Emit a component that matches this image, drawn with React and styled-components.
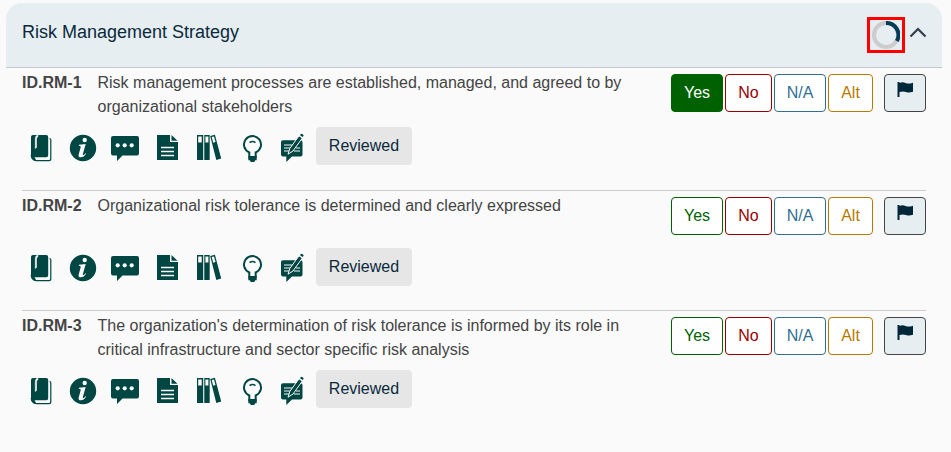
import React from "react";
import styled, { createGlobalStyle } from "styled-components";

const Global = createGlobalStyle`
  * { box-sizing: border-box; }
  body { margin: 0; background: #fafafa; font-family: "Liberation Sans", Arial, sans-serif; font-size: 16px; line-height: 24px; color: #444; }
`;
const Card = styled.section`
  width: 936px; margin: 3px 0 0 6px;
`;
const Header = styled.header`
  height: 65px; display: flex; align-items: flex-start; justify-content: space-between;
  background: #e7eef2; border-bottom: 1px solid #c5cacd; border-radius: 16px 16px 0 0; padding: 0 15px 0 16px;
`;
const Title = styled.h2`
  margin: 16px 0 0; font-size: 18px; font-weight: 400; line-height: 26px; color: #0a2a3c;
`;
const Tools = styled.div`
  display: flex; gap: 4px; padding-top: 14px;
`;
const ProgressFrame = styled.div`
  width: 38px; height: 36px; border: 3px solid #fe0000; display: flex; justify-content: center; align-items: center;
`;
const Ring = styled.svg`
  width: 28px; height: 28px; flex: none;
`;
const Chevron = styled.svg`
  width: 18px; height: 12px; margin-top: 10px;
`;
const Rows = styled.div`
  margin: 0 16px;
`;
const Row = styled.article`
  height: ${(p) => p.$height}px; border-bottom: ${(p) => (p.$last ? "0" : "1px solid #ccc")}; padding-top: 2px;
`;
const Question = styled.div`
  display: flex; height: 48px; align-items: flex-start;
`;
const Code = styled.strong`
  width: 75.5px; margin-top: 1px; font-weight: 700;
`;
const Text = styled.p`
  margin: 1px 0 0; width: 545.5px; white-space: pre-line;
`;
const Answers = styled.div`
  display: flex; gap: 2px; margin: 4px 0 0 28px;
`;
const Answer = styled.button`
  width: ${(p) => p.$width}px; height: 38px; padding: 0; font: inherit; border-radius: 4px;
  border: 1px solid ${(p) => p.$color}; color: ${(p) => (p.$on ? "#fff" : p.$color)};
  background: ${(p) => (p.$on ? p.$color : "#fff")};
`;
const Flag = styled.button`
  width: 42px; height: 38px; margin-left: 9px; padding: 0 0 6px; border: 1px solid #444; border-radius: 4px;
  background: #e7eef2; display: flex; align-items: center; justify-content: center;
`;
const Actions = styled.div`
  display: flex; padding-top: ${(p) => p.$top}px;
`;
const IconBar = styled.div`
  display: flex; margin: ${(p) => p.$offset}px 0 0 -2px; height: 32px;
`;
const Icon = styled.svg`
  width: 42px; height: 32px; flex: none; fill: #004643;
`;
const Reviewed = styled.button`
  width: 96px; height: 38px; margin-left: 2px; padding: 0; border: 0; border-radius: 4px; background: #e6e6e6; color: #0a2a3c; font: inherit;
`;

const PAPER = "#fafafa";
const INK = "#004643";

function Icons({ offset }) {
  return (
    <IconBar $offset={offset}>
      <Icon viewBox="0 0 42 32">
        <path d="M13 3h13.200q2 0 2 2v18.200q0 2-2 2H14.500Q11 25.200 11 22.500V5q0-2 2-2z" />
        <path d="M18 3.200q-2.700.3-2.700 3.300V16.500l1.200-1V7q0-2 1.500-2.500z" fill={PAPER} stroke={PAPER} strokeWidth=".6" />
        <path d="M11.100 23q.8 5.600 5 5.600h12.800q1.900 0 1.900-1.900V8q0-1.500-1.300-1.500" fill="none" stroke={INK} strokeWidth="1.200" />
        <path d="M11 22.500v2.500l3 3.500 2-.5-1.500-3z" />
      </Icon>
      <Icon viewBox="0 0 42 32">
        <circle cx="21" cy="16" r="13.200" />
        <circle cx="22.700" cy="8" r="2.200" fill={PAPER} />
        <path d="M17 12.800l6.700-.8-2.800 10q-.4 1.500.6 1.100.9-.4 1.900-1.900l.7.500q-2.300 3.600-5.200 3.600-2.900 0-2.200-2.900l2-7.400q.3-1.200-1.900-1.300z" fill={PAPER} />
      </Icon>
      <Icon viewBox="0 0 42 32">
        <path d="M9 4h24a2 2 0 0 1 2 2v15.500a2 2 0 0 1-2 2H18.500L13 29v-5.500H9a2 2 0 0 1-2-2V6a2 2 0 0 1 2-2z" />
        {[13.700, 20.700, 27.700].map((x) => <circle key={x} cx={x} cy="13.300" r="2.100" fill={PAPER} />)}
      </Icon>
      <Icon viewBox="0 0 42 32">
        <path d="M11 3h13v7h8v18H11zM25.500 3l6 5.700h-6z" />
        <path d="M15 15.500h13M15 19.500h13M15 23.500h13" stroke={PAPER} strokeWidth="1.300" />
      </Icon>
      <Icon viewBox="0 0 42 32">
        <path d="M9 3h6.200v25H9zM16.300 3h5.400v25h-5.400zM22.200 4l4.700-1.200 6.300 23.700-4.900 1.500z" />
        <path d="M10.200 4.500h3.500v6h-3.500zM17.400 4.500h3v6h-3zM23.700 5l2.300-.6 1.500 5.600-2.300.7z" fill={PAPER} />
      </Icon>
      <Icon viewBox="0 0 42 32">
        <path d="M19.300 25v-4.600a8.500 8.500 0 1 1 6.400 0V25z" fill={PAPER} stroke={INK} strokeWidth="2" />
        <path d="M19.500 10.700q3-2.400 6 0" fill="none" stroke={INK} strokeWidth="1.500" />
        <path d="M18.300 24.300h8.400v4h-1.500l-1 1.700h-3.400l-1-1.700h-1.500z" />
      </Icon>
      <Icon viewBox="0 0 42 32">
        <path d="M11 8.300h17.500a2 2 0 0 1 2 2v12.200a2 2 0 0 1-2 2H20L14.300 30v-5.500H11a2 2 0 0 1-2-2V10.300a2 2 0 0 1 2-2z" />
        <path d="M12 13h11M12 16h9M12 19h6M24 16h4M22 19h6" stroke={PAPER} strokeWidth="1.100" />
        <path d="M16 22.200l1.800-5.700L27 3.800l3.300 2.300L21 19z" stroke={PAPER} strokeWidth="1" />
        <path d="M28 3.300l1-1.500q1.800-.2 2.700 1.700l-1 1.600z" />
      </Icon>
    </IconBar>
  );
}

const ROWS = [
  { code: "ID.RM-1", text: "Risk management processes are established, managed, and agreed to by\norganizational stakeholders", yes: true, height: 123, top: 9, offset: 5 },
  { code: "ID.RM-2", text: "Organizational risk tolerance is determined and clearly expressed", height: 120, top: 7, offset: 4 },
  { code: "ID.RM-3", text: "The organization's determination of risk tolerance is informed by its role in\ncritical infrastructure and sector specific risk analysis", height: 125, top: 9, offset: 5, last: true },
];

export default function App() {
  return (
    <>
      <Global />
      <Card>
        <Header>
          <Title>Risk Management Strategy</Title>
          <Tools>
            <ProgressFrame>
              <Ring viewBox="0 0 28 28" fill="none" strokeWidth="4">
                <circle cx="14" cy="14" r="12" stroke="#ccc" />
                <path d="M14 2A12 12 0 0 1 24.800 20" stroke="#003c57" />
              </Ring>
            </ProgressFrame>
            <Chevron viewBox="0 0 18 12" fill="none" stroke="#333d4b" strokeWidth="2.200">
              <path d="M1.500 9.500L9 2l7.500 7.500" />
            </Chevron>
          </Tools>
        </Header>
        <Rows>
          {ROWS.map((r) => (
            <Row key={r.code} $height={r.height} $last={r.last}>
              <Question>
                <Code>{r.code}</Code>
                <Text>{r.text}</Text>
                <Answers>
                  <Answer $width={52} $color="#006100" $on={r.yes}>Yes</Answer>
                  <Answer $width={47} $color="#990000">No</Answer>
                  <Answer $width={52} $color="#31708f">N/A</Answer>
                  <Answer $width={45} $color="#b77900">Alt</Answer>
                  <Flag aria-label="Flag">
                    <svg width="18" height="18" viewBox="0 0 18 18" fill="#00263a">
                      <path d="M1.500 1h2v15h-2zM3.500 2q3-1.300 6 0t7.500-.3v9q-4 1.500-7 .3t-6.500 0z" />
                    </svg>
                  </Flag>
                </Answers>
              </Question>
              <Actions $top={r.top}>
                <Icons offset={r.offset} />
                <Reviewed>Reviewed</Reviewed>
              </Actions>
            </Row>
          ))}
        </Rows>
      </Card>
    </>
  );
}
